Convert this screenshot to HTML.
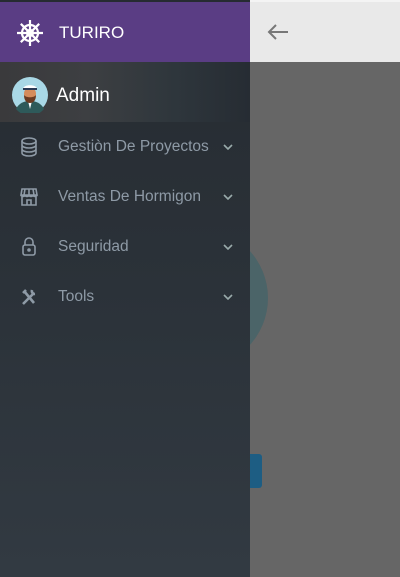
<!DOCTYPE html>
<html><head><meta charset="utf-8">
<style>
*{margin:0;padding:0;box-sizing:border-box}
body{width:400px;height:577px;overflow:hidden;background:#666;font-family:"Liberation Sans",sans-serif;position:relative}
.topr{position:absolute;left:250px;top:0;width:150px;height:62px;background:#e9e9e9;border-top:2px solid #f4f4f4}
.circle{position:absolute;left:128px;top:228px;width:140px;height:140px;border-radius:50%;background:#4b6468}
.btn{position:absolute;left:230px;top:454px;width:32px;height:34px;border-radius:3px;background:#1d5d83}
.side{position:absolute;left:0;top:0;width:250px;height:577px;background:linear-gradient(180deg,#262b31 0%,#2b3239 50%,#323a42 100%)}
.head{position:absolute;left:0;top:2px;width:250px;height:60px;background:#5a3d84;color:#fff;font-size:17px}
.head span{position:absolute;left:59px;top:21px}
.user{position:absolute;left:0;top:62px;width:250px;height:60px;background:linear-gradient(90deg,#3a3a3c 0%,#3d3f42 35%,#2e363c 70%,#262c33 100%)}
.user span{position:absolute;left:56px;top:23px;color:#fff;font-size:19px}
.item{position:absolute;left:0;width:250px;height:50px;color:#8e9aa6;font-size:15.5px}
.item span{position:absolute;left:58px;top:16px}
.item svg.ic{position:absolute;left:20px;top:15px}
.item svg.ch{position:absolute;left:223px;top:22px}
</style></head><body>
<div class="topr">
<svg style="position:absolute;left:17px;top:22px" width="22" height="16" viewBox="0 0 22 16"><path d="M21 8H2M9 1L2 8l7 7" fill="none" stroke="#777" stroke-width="2"/></svg>
</div>
<div class="circle"></div>
<div class="btn"></div>
<div class="side">
<div class="head">
<svg style="position:absolute;left:16px;top:17px" width="28" height="28" viewBox="0 0 28 28" fill="none" stroke="#fff" stroke-width="2.2"><circle cx="14" cy="14" r="8"/><circle cx="14" cy="14" r="3"/><path d="M14 1v26M1 14h26M4.8 4.8l18.4 18.4M23.2 4.8L4.8 23.2"/></svg>
<span>TURIRO</span></div>
<div class="user">
<svg style="position:absolute;left:12px;top:15px" width="36" height="36" viewBox="0 0 36 36"><circle cx="18" cy="18" r="18" fill="#a9d8e6"/><path d="M4 32c3-6 8-8 14-8s11 2 14 8a18 18 0 0 1-28 0z" fill="#2e5a5a"/><path d="M16 24l2 8 2-8z" fill="#fff"/><ellipse cx="18" cy="17" rx="6" ry="7" fill="#d58c5c"/><path d="M12 18c0 6 3 8 6 8s6-2 6-8c-2 3-10 3-12 0z" fill="#6b3b22"/><path d="M11 12c0-5 14-5 14 0z" fill="#fff"/><rect x="11" y="11" width="14" height="2" fill="#2b3a55"/></svg>
<span>Admin</span></div>
<div class="item" style="top:122px">
<svg class="ic" width="18" height="20" viewBox="0 0 18 20" fill="none" stroke="#8e9aa6" stroke-width="1.6"><ellipse cx="9" cy="4" rx="7" ry="3"/><path d="M2 4v12c0 1.7 3 3 7 3s7-1.3 7-3V4M2 8c0 1.7 3 3 7 3s7-1.3 7-3M2 12c0 1.7 3 3 7 3s7-1.3 7-3"/></svg>
<span>Gestiòn De Proyectos</span>
<svg class="ch" width="10" height="6" viewBox="0 0 10 6"><path d="M1 1l4 4 4-4" fill="none" stroke="#9aa" stroke-width="1.6"/></svg></div>
<div class="item" style="top:172px">
<svg class="ic" width="18" height="20" viewBox="0 0 18 20" fill="none" stroke="#8e9aa6" stroke-width="1.6"><path d="M2 2h14l1 6H1zM1 8c0 2 4 2 4 0 0 2 4 2 4 0 0 2 4 2 4 0 0 2 4 2 4 0M2 10v8h14v-8M7 18v-5h4v5M5 2l-1 6M13 2l1 6M9 2v6"/></svg>
<span>Ventas De Hormigon</span>
<svg class="ch" width="10" height="6" viewBox="0 0 10 6"><path d="M1 1l4 4 4-4" fill="none" stroke="#9aa" stroke-width="1.6"/></svg></div>
<div class="item" style="top:222px">
<svg class="ic" width="18" height="20" viewBox="0 0 18 20" fill="none" stroke="#8e9aa6" stroke-width="1.6"><rect x="3" y="8" width="12" height="10" rx="2"/><path d="M5 8V5a4 4 0 0 1 8 0v3"/><circle cx="9" cy="13" r="1" fill="#8e9aa6"/></svg>
<span>Seguridad</span>
<svg class="ch" width="10" height="6" viewBox="0 0 10 6"><path d="M1 1l4 4 4-4" fill="none" stroke="#9aa" stroke-width="1.6"/></svg></div>
<div class="item" style="top:272px">
<svg class="ic" width="18" height="20" viewBox="0 0 18 20" fill="none" stroke="#8e9aa6" stroke-width="2.6"><path d="M3 17l10-10M12 3a3 3 0 0 0 3 4M4 4l10 12M3 6l3-3"/></svg>
<span>Tools</span>
<svg class="ch" width="10" height="6" viewBox="0 0 10 6"><path d="M1 1l4 4 4-4" fill="none" stroke="#9aa" stroke-width="1.6"/></svg></div>
</div>
</body></html>
